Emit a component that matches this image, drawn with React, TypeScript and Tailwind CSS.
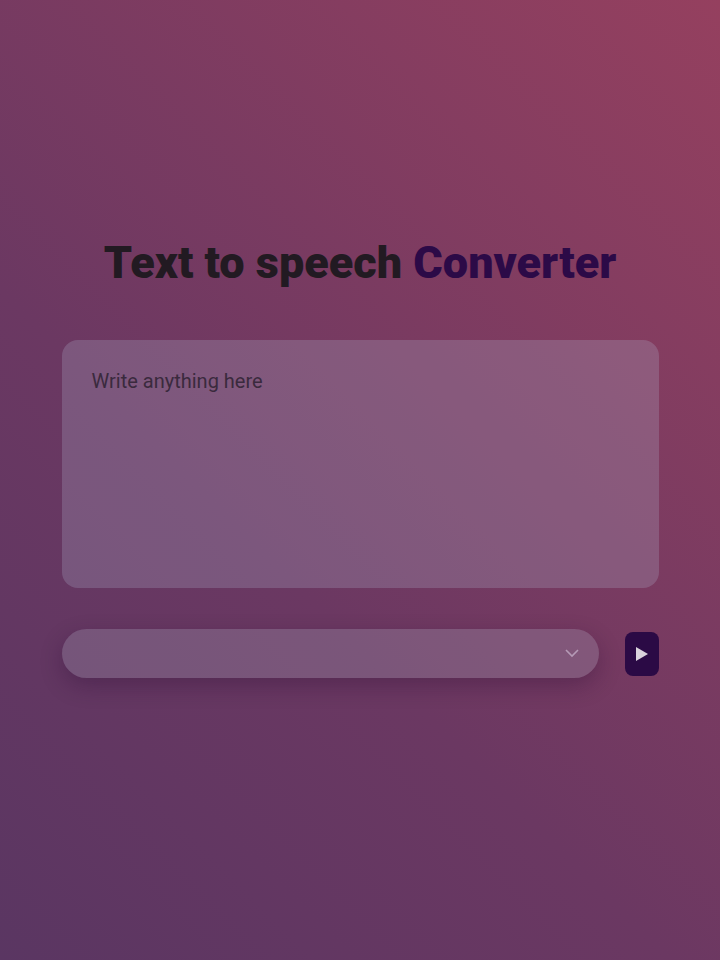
import React, { useState } from "react";

function App() {
  const [text, setText] = useState("");
  const [voice, setVoice] = useState("");

  return (
    <div
      className="min-h-[960px] w-full flex flex-col items-center bg-[linear-gradient(45deg,#5a3662_0%,#6b3862_40%,#95405f_100%)]"
      style={{ fontFamily: "Roboto, 'Noto Sans', sans-serif" }}
    >
      <h1 className="mt-[233px] text-[45px] leading-[60px] font-black text-[#221a22]">
        Text to speech <span className="text-[#2c0a47]">Converter</span>
      </h1>
      <div className="w-[597px] mt-[47px] flex flex-col">
        <textarea
          value={text}
          onChange={(e) => setText(e.target.value)}
          placeholder="Write anything here"
          className="h-[248px] w-full resize-none rounded-2xl bg-[#b4bcd43d] px-[30px] py-[29px] text-[20px] leading-6 text-[#3a2a3d] placeholder:text-[#3a2a3d] outline-none"
        />
        <div className="mt-[41px] flex items-center gap-[26px]">
          <div className="relative flex-1 h-[49px] rounded-full bg-[#b4bcd03a] shadow-[0_8px_22px_rgba(40,10,50,0.3)]">
            <select
              value={voice}
              onChange={(e) => setVoice(e.target.value)}
              className="appearance-none w-full h-full bg-transparent rounded-full px-6 text-[#e5d5e5] outline-none"
            >
              <option value=""></option>
            </select>
            <svg
              className="absolute right-[19px] top-[18px] pointer-events-none"
              width="16"
              height="12"
              viewBox="0 0 16 12"
              fill="none"
              stroke="#b59ab6"
              strokeWidth="1.6"
            >
              <path d="M2 3l6 6 6-6" />
            </svg>
          </div>
          <button className="w-[34px] h-[44px] rounded-lg bg-[#2b0a45] flex items-center justify-center">
            <svg width="14" height="16" viewBox="0 0 14 16">
              <path d="M1 1L13 8L1 15Z" fill="#d9d2dc" />
            </svg>
          </button>
        </div>
      </div>
    </div>
  );
}

export default App;
